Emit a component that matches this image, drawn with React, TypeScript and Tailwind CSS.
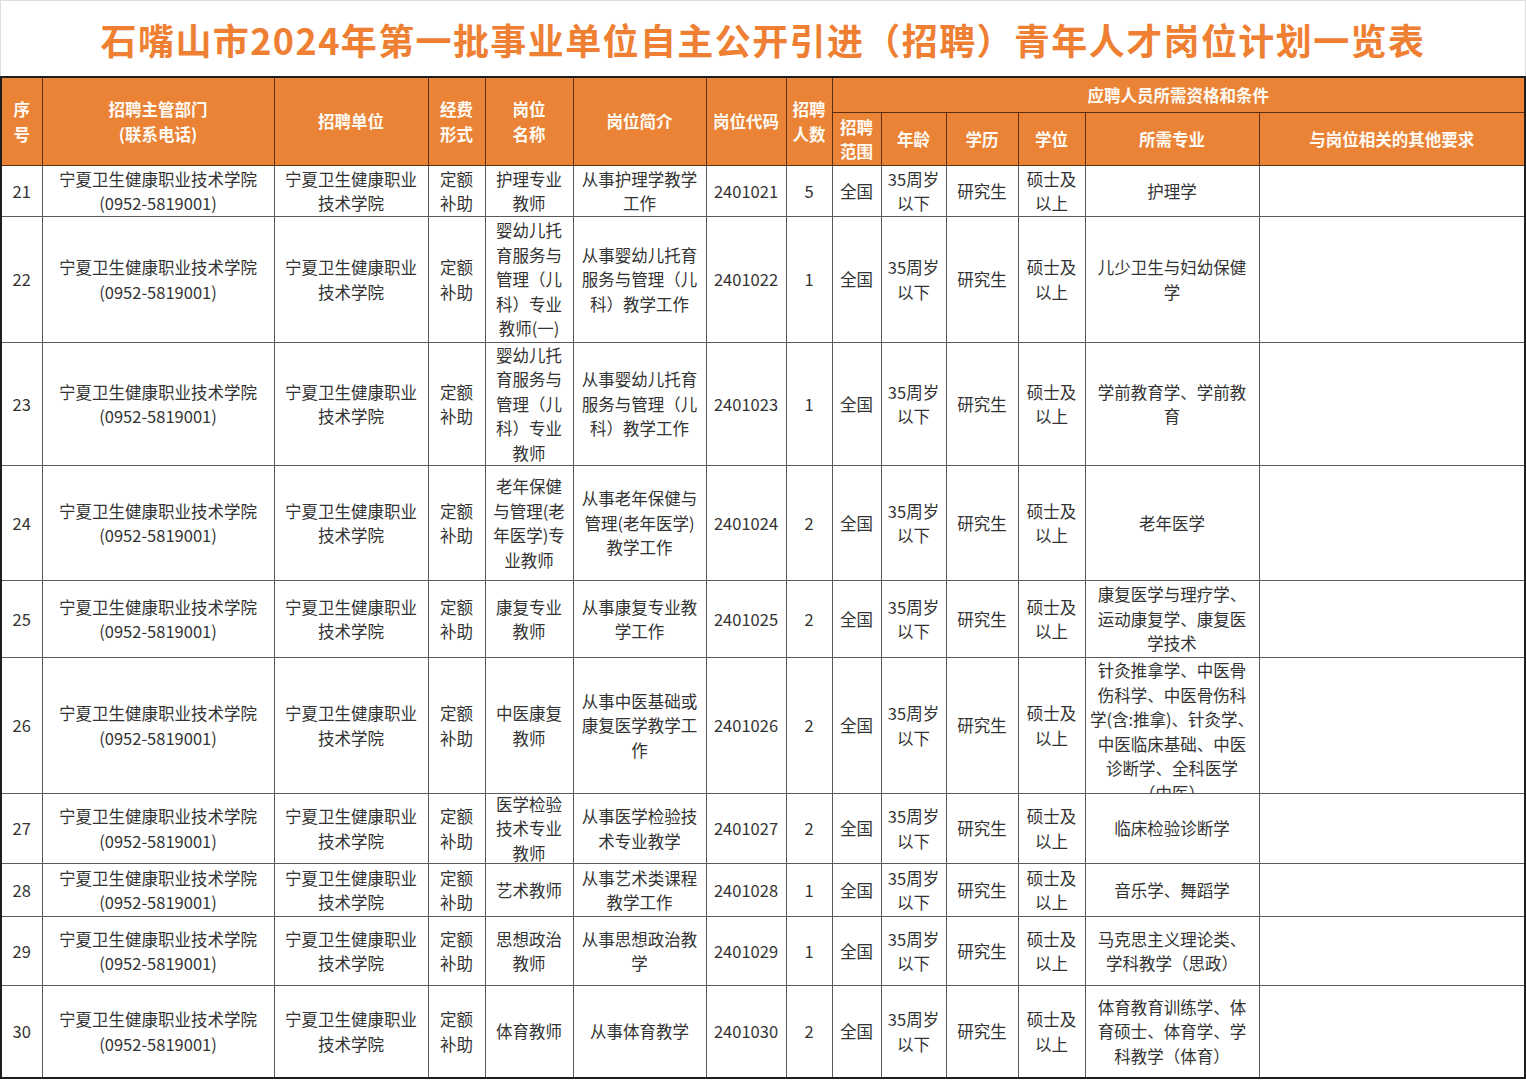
import React from 'react';

type Row = {
  no: string;
  dept: string;
  unit: string;
  fund: string;
  name: string;
  intro: string;
  code: string;
  count: string;
  scope: string;
  age: string;
  edu: string;
  degree: string;
  major: string;
  h: string;
  majorTop?: boolean;
};

const DEPT = '宁夏卫生健康职业技术学院\n(0952-5819001)';
const UNIT = '宁夏卫生健康职业\n技术学院';

const base = {
  dept: DEPT,
  unit: UNIT,
  fund: '定额\n补助',
  scope: '全国',
  age: '35周岁\n以下',
  edu: '研究生',
  degree: '硕士及\n以上',
};

const rows: Row[] = [
  { ...base, no: '21', name: '护理专业\n教师', intro: '从事护理学教学\n工作', code: '2401021', count: '5', major: '护理学', h: 'h-[50px]' },
  { ...base, no: '22', name: '婴幼儿托\n育服务与\n管理（儿\n科）专业\n教师(一)', intro: '从事婴幼儿托育\n服务与管理（儿\n科）教学工作', code: '2401022', count: '1', major: '儿少卫生与妇幼保健\n学', h: 'h-[125px]' },
  { ...base, no: '23', name: '婴幼儿托\n育服务与\n管理（儿\n科）专业\n教师', intro: '从事婴幼儿托育\n服务与管理（儿\n科）教学工作', code: '2401023', count: '1', major: '学前教育学、学前教\n育', h: 'h-[122px]' },
  { ...base, no: '24', name: '老年保健\n与管理(老\n年医学)专\n业教师', intro: '从事老年保健与\n管理(老年医学)\n教学工作', code: '2401024', count: '2', major: '老年医学', h: 'h-[114px]' },
  { ...base, no: '25', name: '康复专业\n教师', intro: '从事康复专业教\n学工作', code: '2401025', count: '2', major: '康复医学与理疗学、\n运动康复学、康复医\n学技术', h: 'h-[76px]' },
  { ...base, no: '26', name: '中医康复\n教师', intro: '从事中医基础或\n康复医学教学工\n作', code: '2401026', count: '2', major: '针灸推拿学、中医骨\n伤科学、中医骨伤科\n学(含:推拿)、针灸学、\n中医临床基础、中医\n诊断学、全科医学\n（中医）', h: 'h-[135px]', majorTop: true },
  { ...base, no: '27', name: '医学检验\n技术专业\n教师', intro: '从事医学检验技\n术专业教学', code: '2401027', count: '2', major: '临床检验诊断学', h: 'h-[69px]' },
  { ...base, no: '28', name: '艺术教师', intro: '从事艺术类课程\n教学工作', code: '2401028', count: '1', major: '音乐学、舞蹈学', h: 'h-[52px]' },
  { ...base, no: '29', name: '思想政治\n教师', intro: '从事思想政治教\n学', code: '2401029', count: '1', major: '马克思主义理论类、\n学科教学（思政）', h: 'h-[68px]' },
  { ...base, no: '30', name: '体育教师', intro: '从事体育教学', code: '2401030', count: '2', major: '体育教育训练学、体\n育硕士、体育学、学\n科教学（体育）', h: 'h-[91px]' },
];

const widths = ['w-[41px]', 'w-[232px]', 'w-[154px]', 'w-[57px]', 'w-[88px]', 'w-[133px]', 'w-[80px]', 'w-[46px]', 'w-[49px]', 'w-[65px]', 'w-[72px]', 'w-[67px]', 'w-[174px]', 'w-[266px]'];

function Lines({ text }: { text: string }) {
  return (
    <>
      {text.split('\n').map((l, i) => (
        <div key={i} className="whitespace-nowrap">
          {l}
        </div>
      ))}
    </>
  );
}

function Td({ text, h, top }: { text: string; h: string; top?: boolean }) {
  return (
    <td className="border border-[#5a5a5a] p-0 align-middle">
      <div className={`${h} flex flex-col items-center overflow-hidden text-center ${top ? 'justify-start' : 'justify-center'}`}>
        <Lines text={text} />
      </div>
    </td>
  );
}

function Th({ text, rowSpan, colSpan, h }: { text: string; rowSpan?: number; colSpan?: number; h?: string }) {
  return (
    <th rowSpan={rowSpan} colSpan={colSpan} className="border border-[#5b2f12] bg-[#ea8336] p-0 align-middle font-bold text-[#fffaf4]">
      <div className={`${h ?? ''} flex flex-col items-center justify-center text-center`}>
        <Lines text={text} />
      </div>
    </th>
  );
}

export default function App() {
  return (
    <div className="w-[1526px] h-[1080px] bg-white font-['Noto_Sans_CJK_SC','Noto_Sans',sans-serif] text-[16.5px] leading-[24.5px] text-[#333333]">
      <div className="h-[76px] flex items-center justify-center border-t border-l border-r border-[#dedede]">
        <h1 className="text-[36px] font-bold tracking-[1.4px] text-[#ee7f33] leading-none">
          石嘴山市2024年第一批事业单位自主公开引进（招聘）青年人才岗位计划一览表
        </h1>
      </div>
      <table className="table-fixed border-collapse w-[1525px] border-2 border-[#1e1e1e]">
        <colgroup>
          {widths.map((w, i) => (
            <col key={i} className={w} />
          ))}
        </colgroup>
        <thead>
          <tr>
            <Th text={'序\n号'} rowSpan={2} />
            <Th text={'招聘主管部门\n(联系电话)'} rowSpan={2} />
            <Th text="招聘单位" rowSpan={2} />
            <Th text={'经费\n形式'} rowSpan={2} />
            <Th text={'岗位\n名称'} rowSpan={2} />
            <Th text="岗位简介" rowSpan={2} />
            <Th text="岗位代码" rowSpan={2} />
            <Th text={'招聘\n人数'} rowSpan={2} />
            <Th text="应聘人员所需资格和条件" colSpan={6} h="h-[34px]" />
          </tr>
          <tr>
            <Th text={'招聘\n范围'} h="h-[52px]" />
            <Th text="年龄" h="h-[52px]" />
            <Th text="学历" h="h-[52px]" />
            <Th text="学位" h="h-[52px]" />
            <Th text="所需专业" h="h-[52px]" />
            <Th text="与岗位相关的其他要求" h="h-[52px]" />
          </tr>
        </thead>
        <tbody>
          {rows.map((r) => (
            <tr key={r.no}>
              <Td text={r.no} h={r.h} />
              <Td text={r.dept} h={r.h} />
              <Td text={r.unit} h={r.h} />
              <Td text={r.fund} h={r.h} />
              <Td text={r.name} h={r.h} />
              <Td text={r.intro} h={r.h} />
              <Td text={r.code} h={r.h} />
              <Td text={r.count} h={r.h} />
              <Td text={r.scope} h={r.h} />
              <Td text={r.age} h={r.h} />
              <Td text={r.edu} h={r.h} />
              <Td text={r.degree} h={r.h} />
              <Td text={r.major} h={r.h} top={r.majorTop} />
              <Td text="" h={r.h} />
            </tr>
          ))}
        </tbody>
      </table>
    </div>
  );
}
